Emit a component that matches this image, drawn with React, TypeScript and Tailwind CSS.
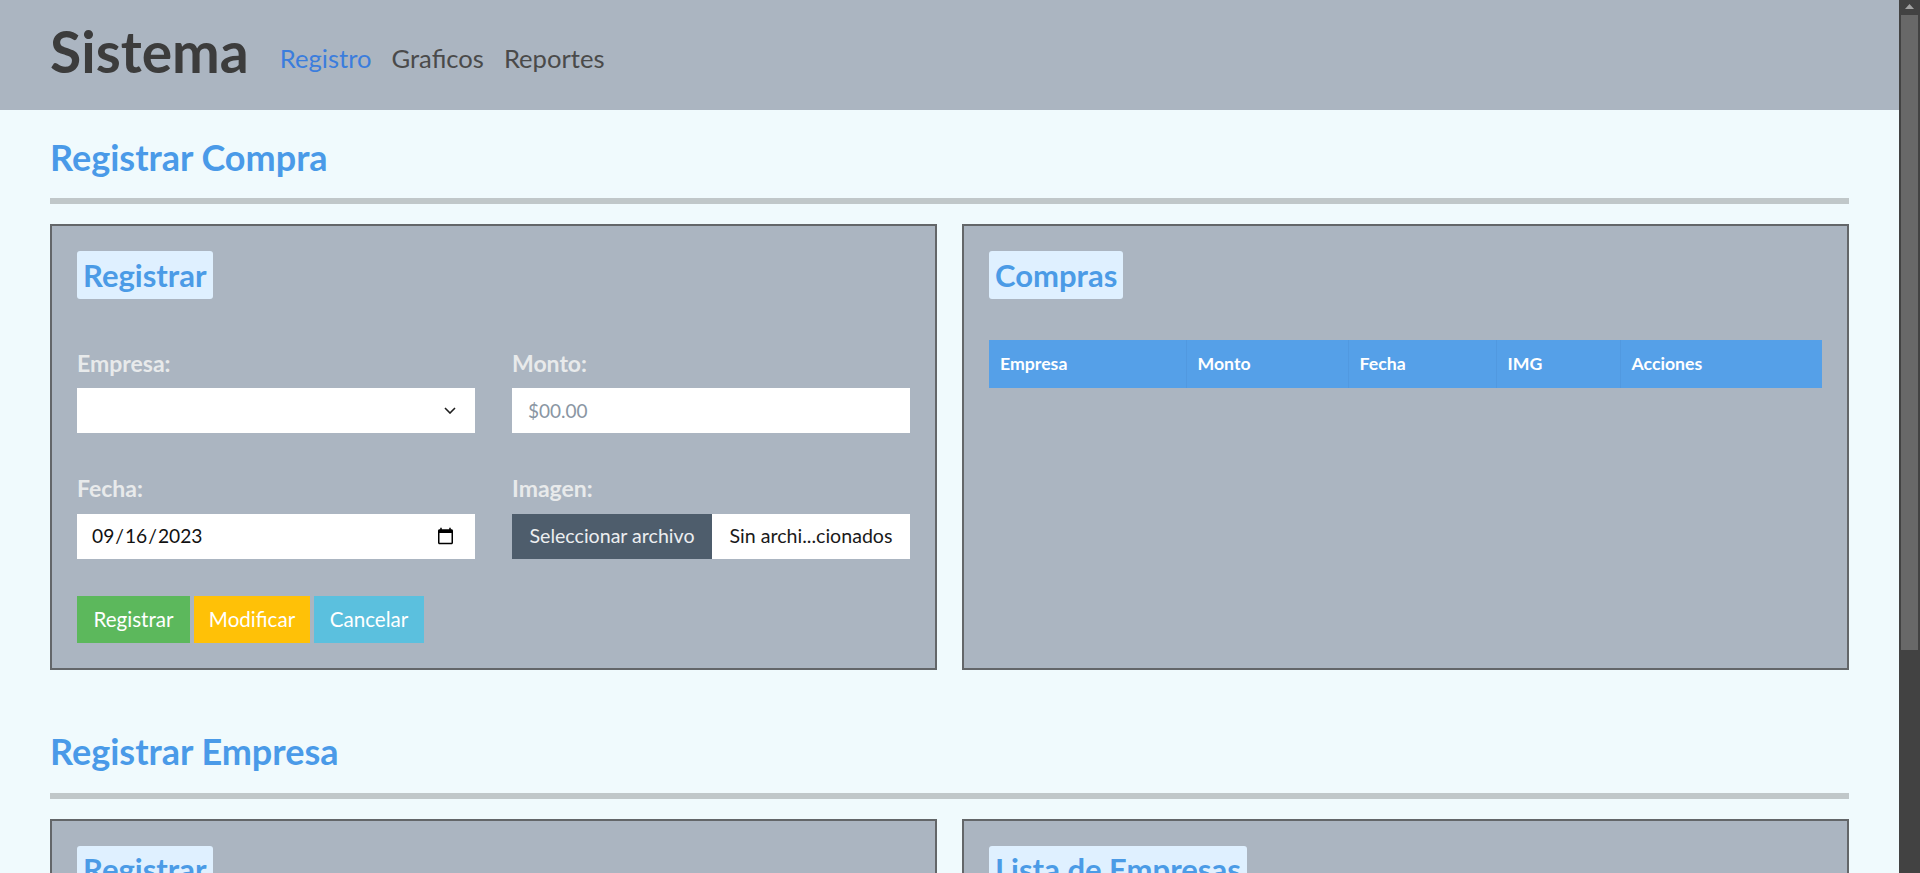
import React from "react";

function Panel({ title, children }: { title: string; children?: React.ReactNode }) {
  return (
    <div className="border-2 border-[#636669] bg-[#abb5c1] p-[25px]">
      <div className="flex">
        <h3 className="rounded-[3px] bg-[#dff0ff] px-[6px] py-[5.3px] text-[31px] font-bold leading-[1.2] text-[#4b9be6]">
          {title}
        </h3>
      </div>
      {children}
    </div>
  );
}

function Field({ label, children }: { label: string; children: React.ReactNode }) {
  return (
    <div className="flex flex-col">
      <label className="mb-[10.8px] text-[23px] font-bold leading-[1.2] text-[#e8eaeb]">{label}</label>
      {children}
    </div>
  );
}

function Section({ title, children, className }: { title: string; children: React.ReactNode; className?: string }) {
  return (
    <section className={className}>
      <h2 className="text-[36px] font-bold leading-[1.2] text-[#4a9ae8]">{title}</h2>
      <div className="mt-[19.6px] h-[6px] bg-[#c0c7c9]" />
      <div className="mt-[20px] grid grid-cols-2 gap-x-[25px]">{children}</div>
    </section>
  );
}

export default function App() {
  return (
    <div className="flex h-[873px] w-full overflow-hidden bg-[#f0fafd] font-['Lato',sans-serif]">
      <div className="min-w-0 flex-1 overflow-hidden">
        <header className="flex h-[110px] items-start bg-[#abb5c1] px-[50px]">
          <h1 className="pt-[17px] text-[57px] font-bold leading-[1.2] text-[#3c3c3c]">Sistema</h1>
          <nav className="ml-[31px] flex gap-[20px] pt-[43px] text-[25.6px] leading-[1.2]">
            <a className="text-[#3b7ddd]">Registro</a>
            <a className="text-[#4a4a4a]">Graficos</a>
            <a className="text-[#4a4a4a]">Reportes</a>
          </nav>
        </header>

        <main className="px-[50px] pt-[25.5px]">
          <Section title="Registrar Compra">
            <Panel title="Registrar">
              <div className="mt-[50.8px] grid grid-cols-2 gap-x-[37px] gap-y-[42px]">
                <Field label="Empresa:">
                  <div className="relative h-[45px] w-full">
                    <select className="h-[45px] w-full appearance-none bg-white px-[12px] text-[19.2px] text-[#222] outline-none">
                      <option></option>
                    </select>
                    <svg
                      className="pointer-events-none absolute right-[19px] top-[19px]"
                      width="12"
                      height="7"
                      viewBox="0 0 12 7"
                      fill="none"
                    >
                      <path d="M1 1l5 5 5-5" stroke="#1f1f1f" strokeWidth="1.6" />
                    </svg>
                  </div>
                </Field>
                <Field label="Monto:">
                  <input
                    type="text"
                    placeholder="$00.00"
                    className="h-[45px] w-full bg-white px-[16px] text-[19px] text-[#222] outline-none placeholder:text-[#8a96a3]"
                  />
                </Field>
                <Field label="Fecha:">
                  <input
                    type="date"
                    defaultValue="2023-09-16"
                    className="h-[45px] w-full bg-white pl-[14px] pr-[18px] text-[19.2px] text-[#111] outline-none"
                  />
                </Field>
                <Field label="Imagen:">
                  <div className="flex h-[45px] w-full bg-white text-[19.6px] leading-[1.2]">
                    <span className="flex w-[200px] items-center justify-center bg-[#4e5d6c] text-[#eceef0]">
                      Seleccionar archivo
                    </span>
                    <span className="flex flex-1 items-center justify-center text-[#1a1a1a]">Sin archi...cionados</span>
                  </div>
                </Field>
              </div>
              <div className="mt-[37px] flex gap-[4px] text-[20.6px] leading-[1.2] text-white">
                <button className="w-[113px] bg-[#5cb85c] py-[11.2px]">Registrar</button>
                <button className="w-[116px] bg-[#ffc107] py-[11.2px]">Modificar</button>
                <button className="w-[110px] bg-[#5bc0de] py-[11.2px]">Cancelar</button>
              </div>
            </Panel>
            <Panel title="Compras">
              <table className="mt-[40.5px] w-full border-collapse text-left text-[17.7px] font-bold leading-[1.2] text-white">
                <thead>
                  <tr className="h-[48px] bg-[#55a0e8]">
                    <th className="w-[197px] border-r border-[#5199e0] pl-[11px] font-bold">Empresa</th>
                    <th className="w-[162px] border-r border-[#5199e0] pl-[11px] font-bold">Monto</th>
                    <th className="w-[148px] border-r border-[#5199e0] pl-[11px] font-bold">Fecha</th>
                    <th className="w-[124px] border-r border-[#5199e0] pl-[11px] font-bold">IMG</th>
                    <th className="pl-[11px] font-bold">Acciones</th>
                  </tr>
                </thead>
                <tbody></tbody>
              </table>
            </Panel>
          </Section>

          <Section title="Registrar Empresa" className="mt-[60.5px]">
            <Panel title="Registrar">
              <div className="mt-[50.8px] grid grid-cols-2 gap-x-[37px]">
                <Field label="Nombre:">
                  <input type="text" className="h-[45px] w-full bg-white px-[16px]" />
                </Field>
              </div>
            </Panel>
            <Panel title="Lista de Empresas">
              <div className="mt-[40px] h-[48px] bg-[#55a0e8]" />
            </Panel>
          </Section>
        </main>
      </div>

      <div className="relative w-[21px] shrink-0 bg-[#424242]">
        <svg className="absolute left-[6px] top-[4px]" width="9" height="6" viewBox="0 0 9 6">
          <polygon points="4.5,0 9,5 0,5" fill="#a3a3a3" />
        </svg>
        <div className="absolute left-[2px] top-[15px] h-[635px] w-[17px] bg-[#686868]" />
      </div>
    </div>
  );
}
